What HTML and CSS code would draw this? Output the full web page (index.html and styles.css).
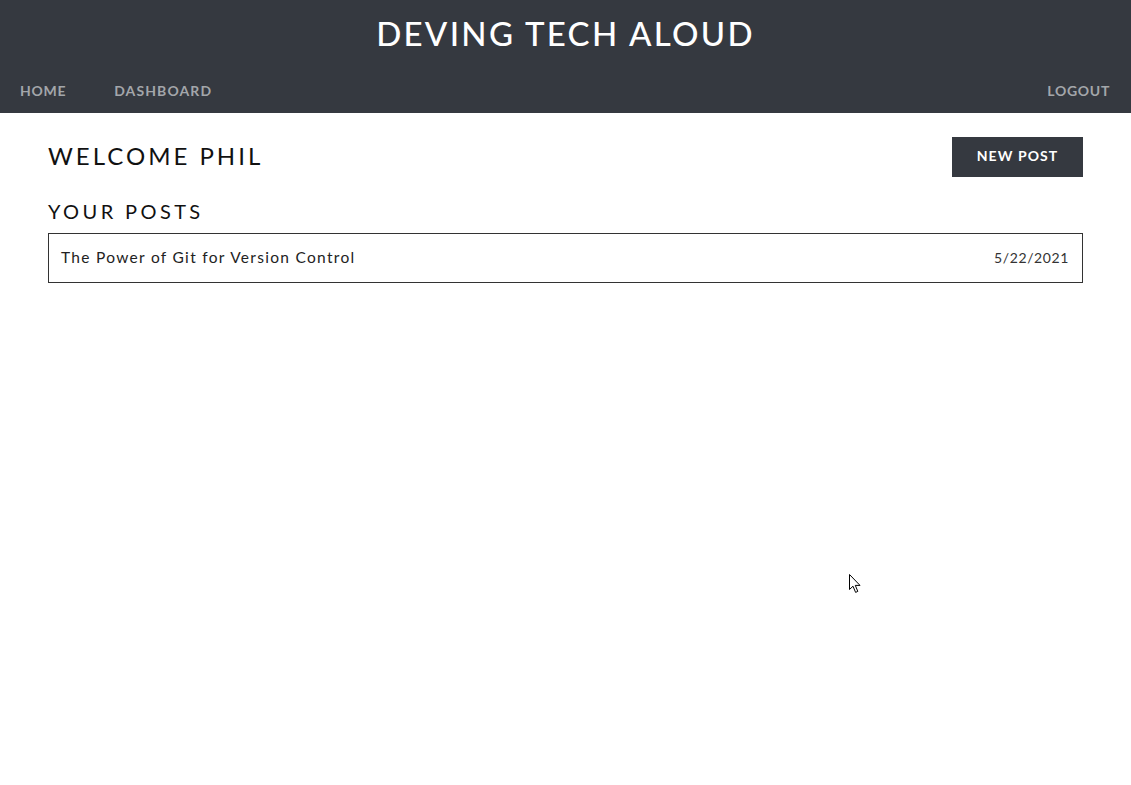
FILE: index.html
```html
<!DOCTYPE html>
<html>
<head>
<meta charset="utf-8">
<link rel="stylesheet" href="styles.css">
</head>
<body>
<header class="site-header">
  <h1 class="site-title">DEVING TECH ALOUD</h1>
  <nav class="nav">
    <div class="nav-left">
      <a class="nav-link" href="#">HOME</a>
      <a class="nav-link" href="#">DASHBOARD</a>
    </div>
    <a class="nav-link" href="#">LOGOUT</a>
  </nav>
</header>
<main class="content">
  <div class="welcome-row">
    <h2 class="welcome">WELCOME PHIL</h2>
    <button class="btn">NEW POST</button>
  </div>
  <h3 class="section-title">YOUR POSTS</h3>
  <div class="post">
    <span class="post-title">The Power of Git for Version Control</span>
    <span class="post-date">5/22/2021</span>
  </div>
</main>
<svg class="cursor" width="13" height="20" viewBox="0 0 13 20"><path d="M0.5 0.5 L0.5 15.5 L4 12.2 L6.6 18.4 L8.8 17.4 L6.3 11.4 L11 11.4 Z" fill="#fff" stroke="#000" stroke-width="1"/></svg>
</body>
</html>
```
FILE: styles.css
```css
* { box-sizing: border-box; }
html, body { margin: 0; padding: 0; background: #fff; }
body { font-family: "Lato", "Noto Sans", sans-serif; color: #222; position: relative; min-height: 785px; }
.site-header { background: #353940; height: 113px; display: flex; flex-direction: column; }
.site-title { margin: 0; padding-top: 13px; text-align: center; color: #fff; font-weight: 500; font-size: 33px; letter-spacing: 2.3px; line-height: 40px; }
.nav { margin-top: auto; display: flex; justify-content: space-between; align-items: center; padding: 0 21px 14px 20px; }
.nav-left { display: flex; gap: 48px; }
.nav-link { color: #a3a6aa; text-decoration: none; font-weight: 700; font-size: 14px; letter-spacing: 0.7px; line-height: 16px; }
.nav-left .nav-link + .nav-link { letter-spacing: 1.1px; }
.content { padding: 22px 48px 0 48px; }
.welcome-row { display: flex; justify-content: space-between; align-items: flex-start; }
.welcome { margin: 0; padding-top: 6px; font-weight: 400; font-size: 24px; line-height: 30px; letter-spacing: 3px; color: #111; }
.btn { background: #353940; color: #fff; border: none; width: 131px; height: 40px; padding: 0 0 3px 0; font-family: inherit; font-weight: 700; font-size: 14px; letter-spacing: 1.1px; margin-top: 2px; }
.section-title { margin: 22px 0 10px 0; font-weight: 400; font-size: 20px; letter-spacing: 3.4px; color: #111; line-height: 24px; }
.post { border: 1px solid #333; height: 50px; display: flex; justify-content: space-between; align-items: center; padding: 0 13px 2px 12px; }
.post-title { font-size: 15.5px; letter-spacing: 1.3px; color: #222; }
.post-date { font-size: 14px; letter-spacing: 0.6px; color: #333; }
.cursor { position: absolute; left: 849px; top: 574px; }
```
